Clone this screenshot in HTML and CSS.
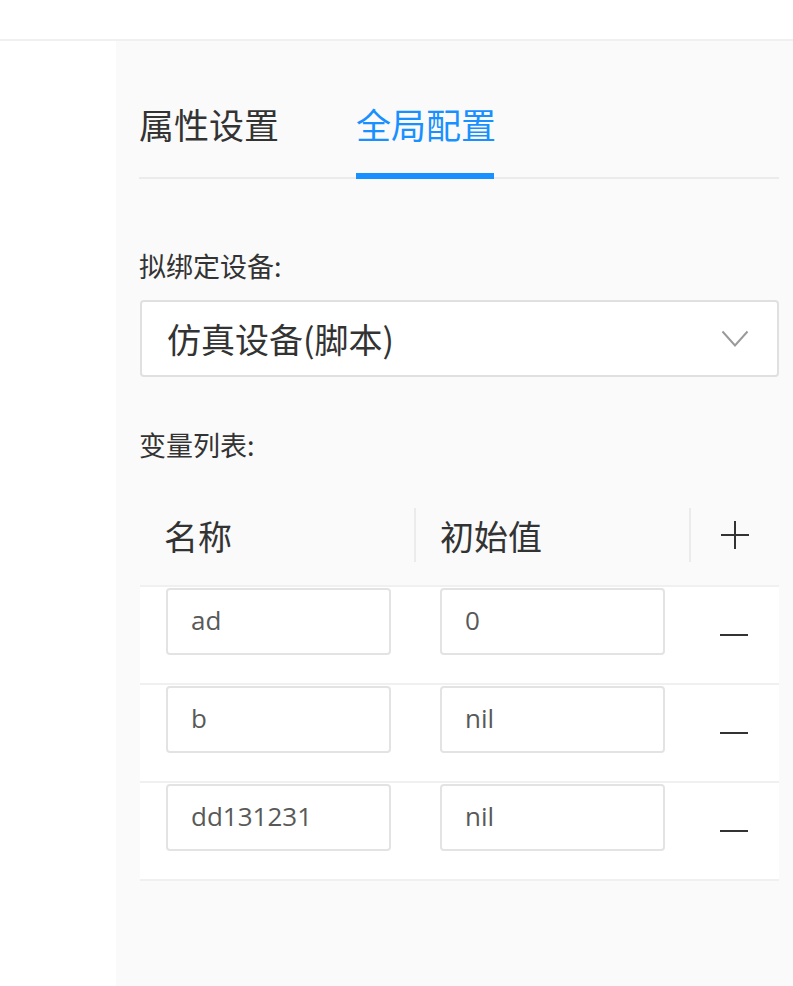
FILE: index.html
```html
<!DOCTYPE html>
<html lang="zh-CN">
<head>
    <meta charset="UTF-8">
    <meta name="viewport" content="width=device-width, initial-scale=1.0">
    <title>全局配置</title>
    <link rel="stylesheet" href="styles.css">
</head>
<body>
<div class="topbar"></div>

<div class="main">
    <div class="side"></div>

    <div class="panel">
        <div class="tabs">
            <div class="tab">属性设置</div>
            <div class="tab active">全局配置</div>
        </div>

        <div class="field-label label-device">拟绑定设备:</div>
        <div class="select">
            <span class="select-value">仿真设备(脚本)</span>
            <svg class="chevron" width="28" height="18" viewBox="0 0 28 18">
                <polyline points="1.5,1.5 14,15.5 26.5,1.5" fill="none" stroke="#9a9a9a" stroke-width="2"/>
            </svg>
        </div>

        <div class="field-label label-vars">变量列表:</div>

        <div class="var-table">
            <div class="var-head">
                <div class="th">名称</div>
                <div class="th th-sep">初始值</div>
                <div class="th th-sep th-action">
                    <svg width="28" height="28" viewBox="0 0 28 28">
                        <line x1="14" y1="0" x2="14" y2="28" stroke="#333" stroke-width="2"/>
                        <line x1="0" y1="14" x2="28" y2="14" stroke="#333" stroke-width="2"/>
                    </svg>
                </div>
            </div>

            <div class="var-row">
                <div class="td"><input class="cell-input" type="text" value="ad"></div>
                <div class="td"><input class="cell-input" type="text" value="0"></div>
                <div class="td td-action">
                    <svg width="28" height="2" viewBox="0 0 28 2"><line x1="0" y1="1" x2="28" y2="1" stroke="#333" stroke-width="2"/></svg>
                </div>
            </div>
            <div class="var-row">
                <div class="td"><input class="cell-input" type="text" value="b"></div>
                <div class="td"><input class="cell-input" type="text" value="nil"></div>
                <div class="td td-action">
                    <svg width="28" height="2" viewBox="0 0 28 2"><line x1="0" y1="1" x2="28" y2="1" stroke="#333" stroke-width="2"/></svg>
                </div>
            </div>
            <div class="var-row">
                <div class="td"><input class="cell-input" type="text" value="dd131231"></div>
                <div class="td"><input class="cell-input" type="text" value="nil"></div>
                <div class="td td-action">
                    <svg width="28" height="2" viewBox="0 0 28 2"><line x1="0" y1="1" x2="28" y2="1" stroke="#333" stroke-width="2"/></svg>
                </div>
            </div>
        </div>
    </div>
</div>
</body>
</html>
```

FILE: styles.css
```css
* {
    box-sizing: border-box;
}

body {
    margin: 0;
    background: #fff;
    color: #333;
    font-family: "Open Sans", "Noto Sans CJK SC", sans-serif;
}

.topbar {
    height: 41px;
    border-bottom: 2px solid #f0f0f0;
}

.main {
    display: flex;
    min-height: 945px;
}

.side {
    width: 116px;
    background: #fff;
}

.panel {
    flex: 1;
    background: #fafafa;
    padding: 0 14px 0 24px;
}

/* tabs */
.tabs {
    display: flex;
    padding-top: 59px;
    border-bottom: 2px solid #ebebeb;
    margin-left: -1px;
}

.tab {
    position: relative;
    font-family: "Noto Sans CJK SC", sans-serif;
    font-size: 35px;
    line-height: 48px;
    padding-bottom: 29px;
    margin-right: 77px;
    color: #333;
}

.tab.active {
    color: #1890ff;
}

.tab.active::after {
    content: "";
    position: absolute;
    left: 0;
    right: 2px;
    bottom: -2px;
    height: 6px;
    background: #1890ff;
}

/* form */
.field-label {
    font-family: "Noto Sans CJK SC", sans-serif;
    font-size: 27px;
    line-height: 40px;
    color: #333;
    margin-left: -1px;
}

.label-device {
    margin-top: 67px;
}

.label-vars {
    margin-top: 48px;
}

.select {
    display: flex;
    align-items: center;
    justify-content: space-between;
    height: 77px;
    margin-top: 14px;
    padding: 0 28px 0 25px;
    background: #fff;
    border: 2px solid #e0e0e0;
    border-radius: 4px;
}

.select-value {
    font-family: "Noto Sans CJK SC", sans-serif;
    font-size: 34px;
    color: #333;
}

/* variable table */
.var-table {
    margin-top: 20px;
}

.var-head,
.var-row {
    display: grid;
    grid-template-columns: 274px 275px 1fr;
}

.var-head {
    height: 100px;
    align-items: center;
}

.th {
    display: flex;
    align-items: center;
    height: 54px;
    padding-left: 24px;
    font-family: "Noto Sans CJK SC", sans-serif;
    font-size: 34px;
    color: #333;
}

.th-sep {
    border-left: 2px solid #ebebeb;
}

.th-action {
    justify-content: center;
    padding-left: 0;
}

.var-row {
    background: #fff;
    border-top: 2px solid #f0f0f0;
    padding: 1px 0 28px;
}

.var-row:last-child {
    border-bottom: 2px solid #f0f0f0;
}

.td {
    padding-left: 26px;
}

.td-action {
    display: flex;
    justify-content: center;
    padding: 46px 0 0;
}

.cell-input {
    display: block;
    width: 225px;
    height: 67px;
    padding: 0 0 4px 23px;
    border: 2px solid #e3e3e3;
    border-radius: 4px;
    background: #fff;
    font-family: "Open Sans", sans-serif;
    font-size: 26px;
    color: #595959;
    outline: none;
}
```
